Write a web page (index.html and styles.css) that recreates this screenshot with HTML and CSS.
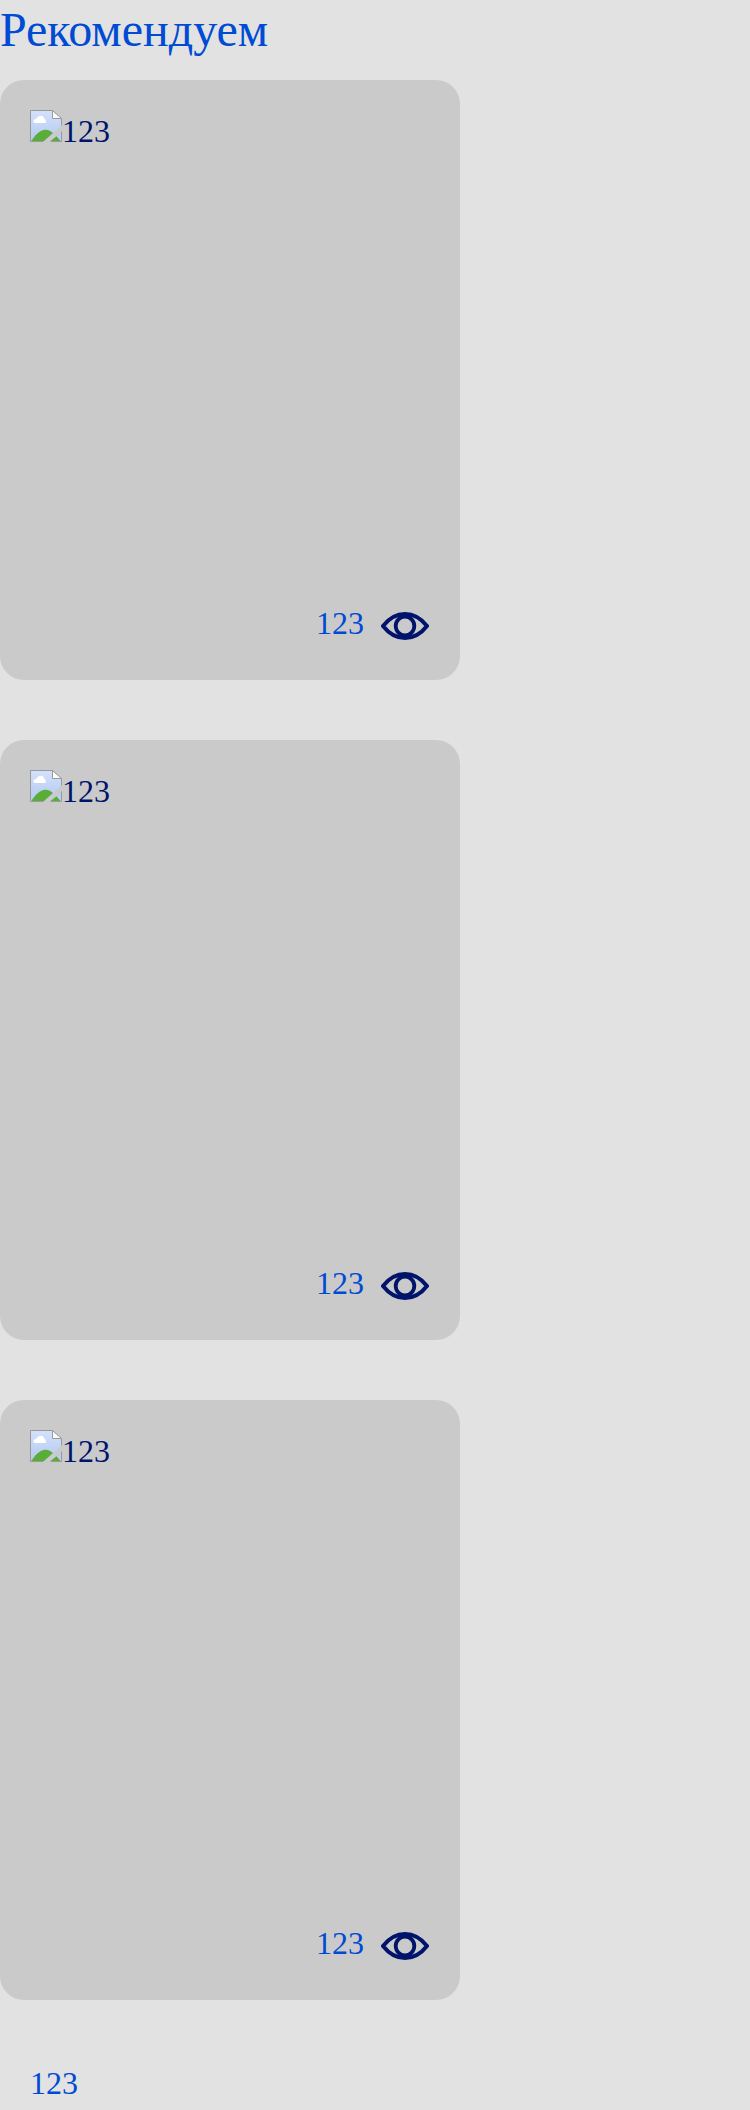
FILE: index.html
```html
<!DOCTYPE html>
<html lang="ru">
<head>
<meta charset="utf-8">
<title>Рекомендуем</title>
<link rel="stylesheet" href="styles.css">
</head>
<body>
<svg class="defs" width="0" height="0" aria-hidden="true">
  <defs>
    <linearGradient id="sky" x1="0" y1="0" x2="0" y2="1">
      <stop offset="0" stop-color="#d3e1fb"/>
      <stop offset="1" stop-color="#b4c9f0"/>
    </linearGradient>
    <symbol id="photo" viewBox="0 0 32 32">
      <path d="M.5.5H22L31.500 9V15.500L14 31.500H.5Z" fill="url(#sky)"/>
      <path d="M31.500 21.500V31.500H20.500Z" fill="#b9cdf2"/>
      <path d="M6 13C3.500 13 3 11.500 3.500 10.500C4 9.500 5 9 6 9C7 7 9 5.700 11 5.800C13 6 14 7.500 14.300 8.700C15.700 9 16 10.500 15.800 13Z" fill="#fff"/>
      <path d="M1.500 31C5 25 10 19.700 15.500 19.700C18.500 19.700 21 21 23 23L14 31ZM20.500 31L26.500 26.300L30.500 31Z" fill="#5aae38"/>
      <path d="M22.500 1V8.500H31.500Z" fill="#fff"/>
      <path d="M13.500 31.500H.5V.5H22.500L31.500 8.500V15.500M22.500.5V8.500H31.500M31.500 21.500V31.500H20.500" fill="none" stroke="#999"/>
    </symbol>
    <symbol id="eye" viewBox="0 0 48 28">
      <path d="M2 14C14.500-2 33.500-2 46 14C33.500 30 14.500 30 2 14Z" fill="none" stroke="#00146b" stroke-width="4" stroke-linejoin="round"/>
      <circle cx="24" cy="14" r="9.300" fill="none" stroke="#00146b" stroke-width="3.800"/>
    </symbol>
  </defs>
</svg>
<h2 class="title">Рекомендуем</h2>
<div class="list">
  <article class="card">
    <div class="preview"><svg class="photo"><use href="#photo"/></svg><span>123</span></div>
    <div class="views"><span>123</span><svg class="eye"><use href="#eye"/></svg></div>
  </article>
  <article class="card">
    <div class="preview"><svg class="photo"><use href="#photo"/></svg><span>123</span></div>
    <div class="views"><span>123</span><svg class="eye"><use href="#eye"/></svg></div>
  </article>
  <article class="card">
    <div class="preview"><svg class="photo"><use href="#photo"/></svg><span>123</span></div>
    <div class="views"><span>123</span><svg class="eye"><use href="#eye"/></svg></div>
  </article>
</div>
<p class="note">123</p>
</body>
</html>
```
FILE: styles.css
```css
* {
  box-sizing: border-box;
}

body {
  margin: 0;
  min-height: 2110px;
  background: #e2e2e2;
  color: #004bd4;
  font: 32px/36px "Liberation Serif", serif;
}

.defs {
  display: block;
}

.title {
  margin: 0 0 20px;
  font-size: 48px;
  font-weight: 400;
  line-height: 60px;
}

.list {
  display: flex;
  flex-direction: column;
  gap: 60px;
}

.card {
  display: flex;
  flex-direction: column;
  justify-content: space-between;
  width: 460px;
  height: 600px;
  padding: 30px;
  border-radius: 24px;
  background: #cacaca;
}

.preview {
  display: flex;
  color: #00146b;
  line-height: 42px;
}

.photo {
  width: 32px;
  height: 32px;
}

.views {
  display: flex;
  justify-content: flex-end;
  gap: 17px;
  height: 44px;
  padding-right: 1px;
  line-height: 34px;
}

.eye {
  width: 48px;
  height: 28px;
  margin-top: 6px;
}

.note {
  margin: 65px 0 0 30px;
}
```
